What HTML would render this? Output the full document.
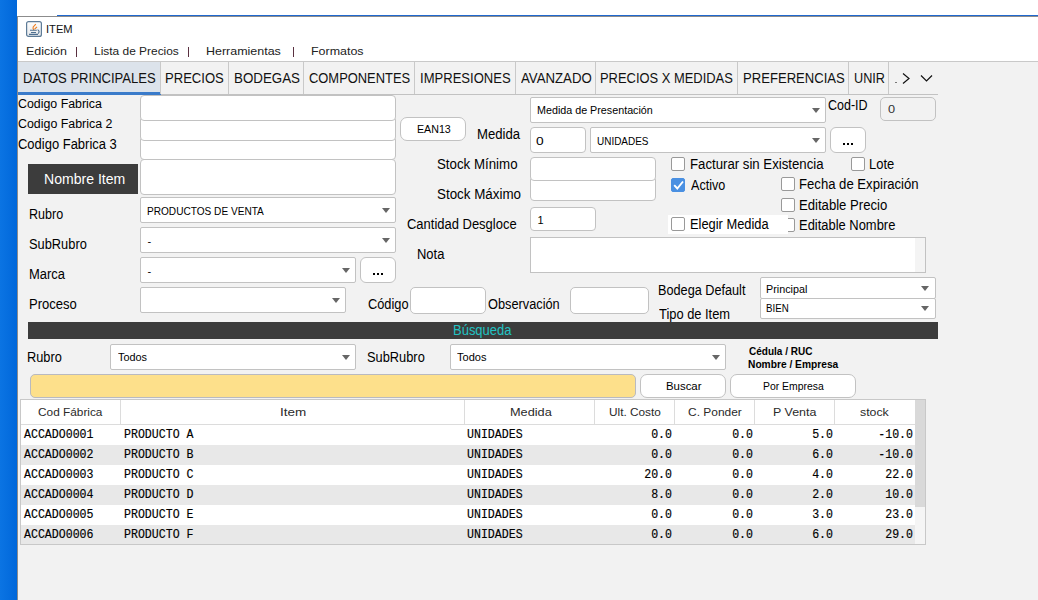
<!DOCTYPE html><html><head><meta charset="utf-8"><style>*{box-sizing:border-box;margin:0;padding:0}
html,body{width:1038px;height:600px;overflow:hidden;background:#f2f2f2;font-family:"Liberation Sans",sans-serif;color:#000}
.a{position:absolute}
.t{position:absolute;white-space:nowrap;line-height:1;transform-origin:left top}
</style></head><body>
<div class="a" style="left:0;top:0;width:17px;height:600px;background:linear-gradient(90deg,#0b74e3,#0067da)"></div>
<div class="a" style="left:17px;top:0;width:1021px;height:16px;background:#fff"></div>
<div class="a" style="left:57px;top:15px;width:981px;height:1px;background:#1f68cf"></div>
<div class="a" style="left:17px;top:16px;width:1021px;height:1px;background:#8c8c8c"></div>
<div class="a" style="left:17px;top:16px;width:1px;height:584px;background:#8c8c8c"></div>
<div class="a" style="left:18px;top:17px;width:1020px;height:44px;background:#fff"></div>
<!-- java icon -->
<svg class="a" style="left:26px;top:21px" width="16" height="16" viewBox="0 0 16 16">
<defs><linearGradient id="jg" x1="0" y1="0" x2="0" y2="1"><stop offset="0" stop-color="#fdfdfd"/><stop offset="1" stop-color="#e6e9ec"/></linearGradient></defs>
<rect x="0.6" y="0.6" width="14.8" height="14.8" rx="2" fill="url(#jg)" stroke="#5d7b97" stroke-width="1.2"/>
<path d="M9.8 3.2 L7.2 6 Q6.5 7.5 8 9.2 M11 5.8 L8.6 8.2" fill="none" stroke="#ef7b1a" stroke-width="1.1"/>
<path d="M4 9.3 H10.8 M5 11.5 H10 M3 13.4 H12" fill="none" stroke="#4f7090" stroke-width="1.1"/>
<path d="M11.6 8.6 Q14.2 10.2 12.2 12.6" fill="none" stroke="#4f7090" stroke-width="1.1"/>
</svg>
<div class="a" style="left:76px;top:47px;width:1px;height:10px;background:#5a3040"></div>
<div class="a" style="left:188px;top:47px;width:1px;height:10px;background:#5a3040"></div>
<div class="a" style="left:293px;top:47px;width:1px;height:10px;background:#5a3040"></div>

<!-- tab bar -->
<div class="a" style="left:18px;top:61px;width:1020px;height:1px;background:#c9c9c9"></div>
<div class="a" style="left:18px;top:94px;width:920px;height:1px;background:#c2c2c2"></div>
<div class="a" style="left:18px;top:62px;width:142px;height:30px;background:#dce3eb"></div>
<div class="a" style="left:18px;top:92px;width:143px;height:3px;background:#3a7bca"></div>
<div class="a" style="left:160px;top:62px;width:1px;height:32px;background:#c9c9c9"></div>
<div class="a" style="left:228px;top:62px;width:1px;height:32px;background:#c9c9c9"></div>
<div class="a" style="left:303px;top:62px;width:1px;height:32px;background:#c9c9c9"></div>
<div class="a" style="left:414px;top:62px;width:1px;height:32px;background:#c9c9c9"></div>
<div class="a" style="left:515px;top:62px;width:1px;height:32px;background:#c9c9c9"></div>
<div class="a" style="left:595px;top:62px;width:1px;height:32px;background:#c9c9c9"></div>
<div class="a" style="left:737px;top:62px;width:1px;height:32px;background:#c9c9c9"></div>
<div class="a" style="left:848px;top:62px;width:1px;height:32px;background:#c9c9c9"></div>
<div class="a" style="left:888px;top:62px;width:1px;height:32px;background:#c9c9c9"></div>
<div class="a" style="left:895px;top:82px;width:2px;height:1px;background:#777"></div>
<svg class="a" style="left:901px;top:72px" width="10" height="13"><path d="M2 1.5 L8 6.5 L2 11.5" fill="none" stroke="#111" stroke-width="1.2"/></svg>
<svg class="a" style="left:920px;top:74px" width="14" height="9"><path d="M1 1.5 L6.5 7 L12 1.5" fill="none" stroke="#111" stroke-width="1.2"/></svg>

<style>
.fld{position:absolute;background:#fff;border:1px solid #c2c2c2;border-radius:4px}
.cmb{position:absolute;background:#fff;border:1px solid #c2c2c2;border-radius:2px}
.arr{position:absolute;width:0;height:0;border-left:4.5px solid transparent;border-right:4.5px solid transparent;border-top:5px solid #666}
.btn{position:absolute;background:#fff;border:1px solid #c2c2c2;border-radius:6px}
.chk{position:absolute;width:14px;height:14px;background:#fff;border:1px solid #999;border-radius:2px}
.dots{position:absolute;width:2px;height:2px;background:#000}
</style>
<!-- left form -->
<div class="fld" style="left:140px;top:159px;width:256px;height:36px"></div>
<div class="fld" style="left:140px;top:136px;width:256px;height:24px"></div>
<div class="fld" style="left:140px;top:116px;width:256px;height:25px"></div>
<div class="fld" style="left:140px;top:95px;width:256px;height:26px"></div>
<div class="a" style="left:28px;top:164px;width:110px;height:30px;background:#3c3c3c"></div>

<div class="cmb" style="left:140px;top:197px;width:256px;height:26px"><div class="arr" style="left:241px;top:10px"></div></div>
<div class="cmb" style="left:140px;top:227px;width:256px;height:26px"><div class="arr" style="left:241px;top:10px"></div></div>
<div class="cmb" style="left:140px;top:257px;width:216px;height:26px"><div class="arr" style="left:201px;top:10px"></div></div>
<div class="btn" style="left:360px;top:257px;width:36px;height:26px"></div>
<div class="dots" style="left:373px;top:273px"></div><div class="dots" style="left:377px;top:273px"></div><div class="dots" style="left:381px;top:273px"></div>
<div class="cmb" style="left:140px;top:287px;width:206px;height:26px"><div class="arr" style="left:191px;top:10px"></div></div>

<!-- middle -->
<div class="btn" style="left:400px;top:117px;width:66px;height:24px;border-radius:7px"></div>
<div class="cmb" style="left:530px;top:97px;width:296px;height:26px"><div class="arr" style="left:281px;top:10px"></div></div>
<div class="fld" style="left:530px;top:127px;width:56px;height:26px"></div>
<div class="cmb" style="left:590px;top:127px;width:236px;height:26px"><div class="arr" style="left:221px;top:10px"></div></div>
<div class="btn" style="left:830px;top:127px;width:36px;height:26px"></div>
<div class="dots" style="left:843px;top:143px"></div><div class="dots" style="left:847px;top:143px"></div><div class="dots" style="left:851px;top:143px"></div>
<div class="fld" style="left:880px;top:97px;width:56px;height:24px;background:#f2f2f2;border-radius:5px"></div>

<div class="fld" style="left:530px;top:176px;width:126px;height:25px"></div>
<div class="fld" style="left:530px;top:157px;width:126px;height:24px"></div>
<div class="fld" style="left:530px;top:207px;width:66px;height:24px"></div>
<div class="a" style="left:530px;top:237px;width:396px;height:36px;background:#fff;border:1px solid #c2c2c2"></div>
<div class="a" style="left:915px;top:238px;width:10px;height:34px;background:#f4f4f4"></div>
<div class="fld" style="left:410px;top:287px;width:76px;height:27px;border-radius:5px"></div>
<div class="fld" style="left:570px;top:287px;width:79px;height:27px;border-radius:5px"></div>

<!-- checkboxes -->
<div class="chk" style="left:671px;top:157px"></div>
<div class="chk" style="left:851px;top:157px"></div>
<div class="chk" style="left:671px;top:178px;background:#4a90e2;border-color:#4a90e2"><svg class="a" style="left:1px;top:1px" width="12" height="12"><path d="M1.2 5.2 L4.3 8.5 L10 1.5" fill="none" stroke="#fff" stroke-width="1.9"/></svg></div>
<div class="chk" style="left:781px;top:177px"></div>
<div class="chk" style="left:781px;top:198px"></div>
<div class="chk" style="left:781px;top:218px"></div>
<div class="a" style="left:668px;top:215px;width:120px;height:19px;background:#fff"></div>
<div class="chk" style="left:671px;top:217px"></div>

<div class="cmb" style="left:760px;top:277px;width:176px;height:22px"><div class="arr" style="left:160px;top:8px"></div></div>
<div class="cmb" style="left:760px;top:298px;width:176px;height:21px"><div class="arr" style="left:160px;top:7px"></div></div>

<!-- busqueda -->
<div class="a" style="left:28px;top:322px;width:910px;height:17px;background:#3c3c3c"></div>
<div class="cmb" style="left:110px;top:344px;width:246px;height:26px"><div class="arr" style="left:231px;top:10px"></div></div>
<div class="cmb" style="left:450px;top:344px;width:276px;height:26px"><div class="arr" style="left:261px;top:10px"></div></div>
<div class="a" style="left:30px;top:374px;width:606px;height:24px;background:#fde08b;border:1px solid #b9bac0;border-radius:5px"></div>
<div class="btn" style="left:640px;top:374px;width:86px;height:24px;border-radius:7px"></div>
<div class="btn" style="left:730px;top:374px;width:126px;height:24px;border-radius:7px"></div>

<!-- table -->
<div class="a" style="left:20px;top:399px;width:906px;height:146px;background:#fff;border:1px solid #c8c8c8"></div>
<div class="a" style="left:21px;top:424px;width:894px;height:1px;background:#dcdcdc"></div>
<div class="a" style="left:120px;top:400px;width:1px;height:24px;background:#dcdcdc"></div>
<div class="a" style="left:464px;top:400px;width:1px;height:24px;background:#dcdcdc"></div>
<div class="a" style="left:594px;top:400px;width:1px;height:24px;background:#dcdcdc"></div>
<div class="a" style="left:674px;top:400px;width:1px;height:24px;background:#dcdcdc"></div>
<div class="a" style="left:754px;top:400px;width:1px;height:24px;background:#dcdcdc"></div>
<div class="a" style="left:834px;top:400px;width:1px;height:24px;background:#dcdcdc"></div>
<div class="a" style="left:21px;top:445px;width:894px;height:20px;background:#e8e8e8"></div>
<div class="a" style="left:21px;top:485px;width:894px;height:20px;background:#e8e8e8"></div>
<div class="a" style="left:21px;top:525px;width:894px;height:19px;background:#e8e8e8"></div>
<div class="a" style="left:915px;top:400px;width:10px;height:144px;background:#f5f5f5"></div>
<div class="a" style="left:915px;top:400px;width:10px;height:107px;background:#d9d9d9"></div>
<div class="t" style="left:45.86px;top:24px;font-family:'Liberation Sans',sans-serif;font-weight:normal;font-size:11.0px;color:#111;transform:scaleX(1.0123);">ITEM</div>
<div class="t" style="left:26.05px;top:46px;font-family:'Liberation Sans',sans-serif;font-weight:normal;font-size:11.0px;color:#222;transform:scaleX(1.1316);">Edición</div>
<div class="t" style="left:94.09px;top:46px;font-family:'Liberation Sans',sans-serif;font-weight:normal;font-size:11.0px;color:#222;transform:scaleX(1.0840);">Lista de Precios</div>
<div class="t" style="left:206.03px;top:46px;font-family:'Liberation Sans',sans-serif;font-weight:normal;font-size:11.0px;color:#222;transform:scaleX(1.1335);">Herramientas</div>
<div class="t" style="left:311.01px;top:46px;font-family:'Liberation Sans',sans-serif;font-weight:normal;font-size:11.0px;color:#222;transform:scaleX(1.1322);">Formatos</div>
<div class="t" style="left:22.99px;top:71px;font-family:'Liberation Sans',sans-serif;font-weight:normal;font-size:14.0px;color:#111;transform:scaleX(0.9323);">DATOS PRINCIPALES</div>
<div class="t" style="left:165.09px;top:71px;font-family:'Liberation Sans',sans-serif;font-weight:normal;font-size:14.0px;color:#111;transform:scaleX(0.9335);">PRECIOS</div>
<div class="t" style="left:233.96px;top:71px;font-family:'Liberation Sans',sans-serif;font-weight:normal;font-size:14.0px;color:#111;transform:scaleX(0.9530);">BODEGAS</div>
<div class="t" style="left:308.63px;top:71px;font-family:'Liberation Sans',sans-serif;font-weight:normal;font-size:14.0px;color:#111;transform:scaleX(0.9226);">COMPONENTES</div>
<div class="t" style="left:419.76px;top:71px;font-family:'Liberation Sans',sans-serif;font-weight:normal;font-size:14.0px;color:#111;transform:scaleX(0.9324);">IMPRESIONES</div>
<div class="t" style="left:520.69px;top:71px;font-family:'Liberation Sans',sans-serif;font-weight:normal;font-size:14.0px;color:#111;transform:scaleX(0.9442);">AVANZADO</div>
<div class="t" style="left:600.46px;top:71px;font-family:'Liberation Sans',sans-serif;font-weight:normal;font-size:14.0px;color:#111;transform:scaleX(0.9228);">PRECIOS X MEDIDAS</div>
<div class="t" style="left:742.75px;top:71px;font-family:'Liberation Sans',sans-serif;font-weight:normal;font-size:14.0px;color:#111;transform:scaleX(0.9348);">PREFERENCIAS</div>
<div class="t" style="left:853.70px;top:71px;font-family:'Liberation Sans',sans-serif;font-weight:normal;font-size:14.0px;color:#111;transform:scaleX(0.9041);">UNIR</div>
<div class="t" style="left:18.21px;top:98px;font-family:'Liberation Sans',sans-serif;font-weight:normal;font-size:12.5px;color:#000;transform:scaleX(0.9900);">Codigo Fabrica</div>
<div class="t" style="left:18.21px;top:118px;font-family:'Liberation Sans',sans-serif;font-weight:normal;font-size:12.5px;color:#000;transform:scaleX(0.9913);">Codigo Fabrica 2</div>
<div class="t" style="left:18.22px;top:137px;font-family:'Liberation Sans',sans-serif;font-weight:normal;font-size:14.0px;color:#000;transform:scaleX(0.9265);">Codigo Fabrica 3</div>
<div class="t" style="left:43.70px;top:172px;font-family:'Liberation Sans',sans-serif;font-weight:normal;font-size:14.0px;color:#fff;transform:scaleX(1.0041);">Nombre Item</div>
<div class="t" style="left:28.59px;top:207px;font-family:'Liberation Sans',sans-serif;font-weight:normal;font-size:14.0px;color:#000;transform:scaleX(0.8966);">Rubro</div>
<div class="t" style="left:28.59px;top:237px;font-family:'Liberation Sans',sans-serif;font-weight:normal;font-size:14.0px;color:#000;transform:scaleX(0.9173);">SubRubro</div>
<div class="t" style="left:28.59px;top:267px;font-family:'Liberation Sans',sans-serif;font-weight:normal;font-size:14.0px;color:#000;transform:scaleX(0.9256);">Marca</div>
<div class="t" style="left:28.59px;top:297px;font-family:'Liberation Sans',sans-serif;font-weight:normal;font-size:14.0px;color:#000;transform:scaleX(0.9316);">Proceso</div>
<div class="t" style="left:416.74px;top:124px;font-family:'Liberation Sans',sans-serif;font-weight:normal;font-size:11.0px;color:#000;transform:scaleX(0.9689);">EAN13</div>
<div class="t" style="left:477.44px;top:127px;font-family:'Liberation Sans',sans-serif;font-weight:normal;font-size:14.0px;color:#000;transform:scaleX(0.9382);">Medida</div>
<div class="t" style="left:437.36px;top:157px;font-family:'Liberation Sans',sans-serif;font-weight:normal;font-size:14.0px;color:#000;transform:scaleX(0.9497);">Stock Mínimo</div>
<div class="t" style="left:437.36px;top:187px;font-family:'Liberation Sans',sans-serif;font-weight:normal;font-size:14.0px;color:#000;transform:scaleX(0.9555);">Stock Máximo</div>
<div class="t" style="left:407.34px;top:217px;font-family:'Liberation Sans',sans-serif;font-weight:normal;font-size:14.0px;color:#000;transform:scaleX(0.9266);">Cantidad Desgloce</div>
<div class="t" style="left:417.39px;top:247px;font-family:'Liberation Sans',sans-serif;font-weight:normal;font-size:14.0px;color:#000;transform:scaleX(0.9264);">Nota</div>
<div class="t" style="left:367.93px;top:297px;font-family:'Liberation Sans',sans-serif;font-weight:normal;font-size:14.0px;color:#000;transform:scaleX(0.9142);">Código</div>
<div class="t" style="left:487.92px;top:297px;font-family:'Liberation Sans',sans-serif;font-weight:normal;font-size:14.0px;color:#000;transform:scaleX(0.9119);">Observación</div>
<div class="t" style="left:828.09px;top:98px;font-family:'Liberation Sans',sans-serif;font-weight:normal;font-size:14.0px;color:#000;transform:scaleX(0.8918);">Cod-ID</div>
<div class="t" style="left:888.25px;top:105px;font-family:'Liberation Sans',sans-serif;font-weight:normal;font-size:10.2px;color:#333;transform:scaleX(1.2500);">0</div>
<div class="t" style="left:689.57px;top:157px;font-family:'Liberation Sans',sans-serif;font-weight:normal;font-size:14.0px;color:#000;transform:scaleX(0.9431);">Facturar sin Existencia</div>
<div class="t" style="left:868.98px;top:157px;font-family:'Liberation Sans',sans-serif;font-weight:normal;font-size:14.0px;color:#000;transform:scaleX(0.9281);">Lote</div>
<div class="t" style="left:690.50px;top:178px;font-family:'Liberation Sans',sans-serif;font-weight:normal;font-size:14.0px;color:#000;transform:scaleX(0.8993);">Activo</div>
<div class="t" style="left:798.98px;top:177px;font-family:'Liberation Sans',sans-serif;font-weight:normal;font-size:14.0px;color:#000;transform:scaleX(0.9374);">Fecha de Expiración</div>
<div class="t" style="left:798.97px;top:198px;font-family:'Liberation Sans',sans-serif;font-weight:normal;font-size:14.0px;color:#000;transform:scaleX(0.9373);">Editable Precio</div>
<div class="t" style="left:798.99px;top:218px;font-family:'Liberation Sans',sans-serif;font-weight:normal;font-size:14.0px;color:#000;transform:scaleX(0.9239);">Editable Nombre</div>
<div class="t" style="left:689.59px;top:217px;font-family:'Liberation Sans',sans-serif;font-weight:normal;font-size:14.0px;color:#000;transform:scaleX(0.9191);">Elegir Medida</div>
<div class="t" style="left:658.03px;top:283px;font-family:'Liberation Sans',sans-serif;font-weight:normal;font-size:14.0px;color:#000;transform:scaleX(0.9062);">Bodega Default</div>
<div class="t" style="left:658.91px;top:307px;font-family:'Liberation Sans',sans-serif;font-weight:normal;font-size:14.0px;color:#000;transform:scaleX(0.9195);">Tipo de Item</div>
<div class="t" style="left:147.01px;top:206px;font-family:'Liberation Sans',sans-serif;font-weight:normal;font-size:11.0px;color:#000;transform:scaleX(0.9176);">PRODUCTOS DE VENTA</div>
<div class="t" style="left:147.40px;top:236px;font-family:'Liberation Sans',sans-serif;font-weight:normal;font-size:11.0px;color:#000;transform:scaleX(1.0000);">-</div>
<div class="t" style="left:147.40px;top:266px;font-family:'Liberation Sans',sans-serif;font-weight:normal;font-size:11.0px;color:#000;transform:scaleX(1.0000);">-</div>
<div class="t" style="left:536.93px;top:105px;font-family:'Liberation Sans',sans-serif;font-weight:normal;font-size:11.0px;color:#000;transform:scaleX(0.9761);">Medida de Presentación</div>
<div class="t" style="left:536.46px;top:136px;font-family:'Liberation Sans',sans-serif;font-weight:normal;font-size:11.0px;color:#000;transform:scaleX(1.2500);">0</div>
<div class="t" style="left:596.63px;top:136px;font-family:'Liberation Sans',sans-serif;font-weight:normal;font-size:11.0px;color:#000;transform:scaleX(0.9064);">UNIDADES</div>
<div class="t" style="left:537.40px;top:215px;font-family:'Liberation Sans',sans-serif;font-weight:normal;font-size:11.0px;color:#000;transform:scaleX(1.0000);">1</div>
<div class="t" style="left:766.32px;top:284px;font-family:'Liberation Sans',sans-serif;font-weight:normal;font-size:11.0px;color:#000;transform:scaleX(0.9798);">Principal</div>
<div class="t" style="left:766.38px;top:303px;font-family:'Liberation Sans',sans-serif;font-weight:normal;font-size:11.0px;color:#000;transform:scaleX(0.8848);">BIEN</div>
<div class="t" style="left:118.34px;top:352px;font-family:'Liberation Sans',sans-serif;font-weight:normal;font-size:11.0px;color:#000;transform:scaleX(0.9884);">Todos</div>
<div class="t" style="left:457.27px;top:352px;font-family:'Liberation Sans',sans-serif;font-weight:normal;font-size:11.0px;color:#000;transform:scaleX(1.0043);">Todos</div>
<div class="t" style="left:27.41px;top:350px;font-family:'Liberation Sans',sans-serif;font-weight:normal;font-size:14.0px;color:#000;transform:scaleX(0.9145);">Rubro</div>
<div class="t" style="left:367.46px;top:350px;font-family:'Liberation Sans',sans-serif;font-weight:normal;font-size:14.0px;color:#000;transform:scaleX(0.9164);">SubRubro</div>
<div class="t" style="left:453.16px;top:323px;font-family:'Liberation Sans',sans-serif;font-weight:normal;font-size:14.0px;color:#22c3c3;transform:scaleX(0.9272);">Búsqueda</div>
<div class="t" style="left:748.67px;top:347px;font-family:'Liberation Sans',sans-serif;font-weight:bold;font-size:10.4px;color:#000;transform:scaleX(0.9628);">Cédula / RUC</div>
<div class="t" style="left:747.58px;top:360px;font-family:'Liberation Sans',sans-serif;font-weight:bold;font-size:10.4px;color:#000;transform:scaleX(0.9833);">Nombre / Empresa</div>
<div class="t" style="left:665.84px;top:381px;font-family:'Liberation Sans',sans-serif;font-weight:normal;font-size:11.0px;color:#000;transform:scaleX(1.0370);">Buscar</div>
<div class="t" style="left:762.61px;top:381px;font-family:'Liberation Sans',sans-serif;font-weight:normal;font-size:11.0px;color:#000;transform:scaleX(0.9466);">Por Empresa</div>
<div class="t" style="left:38.35px;top:407px;font-family:'Liberation Sans',sans-serif;font-weight:normal;font-size:11.0px;color:#2a2a2a;transform:scaleX(1.0757);">Cod Fábrica</div>
<div class="t" style="left:280.06px;top:407px;font-family:'Liberation Sans',sans-serif;font-weight:normal;font-size:11.0px;color:#2a2a2a;transform:scaleX(1.2252);">Item</div>
<div class="t" style="left:510.20px;top:407px;font-family:'Liberation Sans',sans-serif;font-weight:normal;font-size:11.0px;color:#2a2a2a;transform:scaleX(1.1565);">Medida</div>
<div class="t" style="left:609.32px;top:407px;font-family:'Liberation Sans',sans-serif;font-weight:normal;font-size:11.0px;color:#2a2a2a;transform:scaleX(1.0739);">Ult. Costo</div>
<div class="t" style="left:688.33px;top:407px;font-family:'Liberation Sans',sans-serif;font-weight:normal;font-size:11.0px;color:#2a2a2a;transform:scaleX(1.0861);">C. Ponder</div>
<div class="t" style="left:773.34px;top:407px;font-family:'Liberation Sans',sans-serif;font-weight:normal;font-size:11.0px;color:#2a2a2a;transform:scaleX(1.1309);">P Venta</div>
<div class="t" style="left:860.32px;top:407px;font-family:'Liberation Sans',sans-serif;font-weight:normal;font-size:11.0px;color:#2a2a2a;transform:scaleX(1.1201);">stock</div>
<div class="t" style="left:24.43px;top:429px;font-family:'Liberation Mono',monospace;font-size:12.0px;color:#000;transform:scaleX(0.9653);-webkit-text-stroke:0.15px #000">ACCADO0001</div>
<div class="t" style="left:124.03px;top:429px;font-family:'Liberation Mono',monospace;font-size:12.0px;color:#000;transform:scaleX(0.9653);-webkit-text-stroke:0.15px #000">PRODUCTO&nbsp;A</div>
<div class="t" style="left:467.33px;top:429px;font-family:'Liberation Mono',monospace;font-size:12.0px;color:#000;transform:scaleX(0.9653);-webkit-text-stroke:0.15px #000">UNIDADES</div>
<div class="t" style="left:272.27px;width:400px;text-align:right;top:429px;font-family:'Liberation Mono',monospace;font-size:12.0px;color:#000;transform-origin:right;transform:scaleX(0.9653);-webkit-text-stroke:0.15px #000">0.0</div>
<div class="t" style="left:352.57px;width:400px;text-align:right;top:429px;font-family:'Liberation Mono',monospace;font-size:12.0px;color:#000;transform-origin:right;transform:scaleX(0.9653);-webkit-text-stroke:0.15px #000">0.0</div>
<div class="t" style="left:432.57px;width:400px;text-align:right;top:429px;font-family:'Liberation Mono',monospace;font-size:12.0px;color:#000;transform-origin:right;transform:scaleX(0.9653);-webkit-text-stroke:0.15px #000">5.0</div>
<div class="t" style="left:512.57px;width:400px;text-align:right;top:429px;font-family:'Liberation Mono',monospace;font-size:12.0px;color:#000;transform-origin:right;transform:scaleX(0.9653);-webkit-text-stroke:0.15px #000">-10.0</div>
<div class="t" style="left:24.43px;top:449px;font-family:'Liberation Mono',monospace;font-size:12.0px;color:#000;transform:scaleX(0.9653);-webkit-text-stroke:0.15px #000">ACCADO0002</div>
<div class="t" style="left:124.03px;top:449px;font-family:'Liberation Mono',monospace;font-size:12.0px;color:#000;transform:scaleX(0.9653);-webkit-text-stroke:0.15px #000">PRODUCTO&nbsp;B</div>
<div class="t" style="left:467.33px;top:449px;font-family:'Liberation Mono',monospace;font-size:12.0px;color:#000;transform:scaleX(0.9653);-webkit-text-stroke:0.15px #000">UNIDADES</div>
<div class="t" style="left:272.27px;width:400px;text-align:right;top:449px;font-family:'Liberation Mono',monospace;font-size:12.0px;color:#000;transform-origin:right;transform:scaleX(0.9653);-webkit-text-stroke:0.15px #000">0.0</div>
<div class="t" style="left:352.57px;width:400px;text-align:right;top:449px;font-family:'Liberation Mono',monospace;font-size:12.0px;color:#000;transform-origin:right;transform:scaleX(0.9653);-webkit-text-stroke:0.15px #000">0.0</div>
<div class="t" style="left:432.57px;width:400px;text-align:right;top:449px;font-family:'Liberation Mono',monospace;font-size:12.0px;color:#000;transform-origin:right;transform:scaleX(0.9653);-webkit-text-stroke:0.15px #000">6.0</div>
<div class="t" style="left:512.57px;width:400px;text-align:right;top:449px;font-family:'Liberation Mono',monospace;font-size:12.0px;color:#000;transform-origin:right;transform:scaleX(0.9653);-webkit-text-stroke:0.15px #000">-10.0</div>
<div class="t" style="left:24.43px;top:469px;font-family:'Liberation Mono',monospace;font-size:12.0px;color:#000;transform:scaleX(0.9653);-webkit-text-stroke:0.15px #000">ACCADO0003</div>
<div class="t" style="left:124.03px;top:469px;font-family:'Liberation Mono',monospace;font-size:12.0px;color:#000;transform:scaleX(0.9653);-webkit-text-stroke:0.15px #000">PRODUCTO&nbsp;C</div>
<div class="t" style="left:467.33px;top:469px;font-family:'Liberation Mono',monospace;font-size:12.0px;color:#000;transform:scaleX(0.9653);-webkit-text-stroke:0.15px #000">UNIDADES</div>
<div class="t" style="left:272.27px;width:400px;text-align:right;top:469px;font-family:'Liberation Mono',monospace;font-size:12.0px;color:#000;transform-origin:right;transform:scaleX(0.9653);-webkit-text-stroke:0.15px #000">20.0</div>
<div class="t" style="left:352.57px;width:400px;text-align:right;top:469px;font-family:'Liberation Mono',monospace;font-size:12.0px;color:#000;transform-origin:right;transform:scaleX(0.9653);-webkit-text-stroke:0.15px #000">0.0</div>
<div class="t" style="left:432.57px;width:400px;text-align:right;top:469px;font-family:'Liberation Mono',monospace;font-size:12.0px;color:#000;transform-origin:right;transform:scaleX(0.9653);-webkit-text-stroke:0.15px #000">4.0</div>
<div class="t" style="left:512.57px;width:400px;text-align:right;top:469px;font-family:'Liberation Mono',monospace;font-size:12.0px;color:#000;transform-origin:right;transform:scaleX(0.9653);-webkit-text-stroke:0.15px #000">22.0</div>
<div class="t" style="left:24.43px;top:489px;font-family:'Liberation Mono',monospace;font-size:12.0px;color:#000;transform:scaleX(0.9653);-webkit-text-stroke:0.15px #000">ACCADO0004</div>
<div class="t" style="left:124.03px;top:489px;font-family:'Liberation Mono',monospace;font-size:12.0px;color:#000;transform:scaleX(0.9653);-webkit-text-stroke:0.15px #000">PRODUCTO&nbsp;D</div>
<div class="t" style="left:467.33px;top:489px;font-family:'Liberation Mono',monospace;font-size:12.0px;color:#000;transform:scaleX(0.9653);-webkit-text-stroke:0.15px #000">UNIDADES</div>
<div class="t" style="left:272.27px;width:400px;text-align:right;top:489px;font-family:'Liberation Mono',monospace;font-size:12.0px;color:#000;transform-origin:right;transform:scaleX(0.9653);-webkit-text-stroke:0.15px #000">8.0</div>
<div class="t" style="left:352.57px;width:400px;text-align:right;top:489px;font-family:'Liberation Mono',monospace;font-size:12.0px;color:#000;transform-origin:right;transform:scaleX(0.9653);-webkit-text-stroke:0.15px #000">0.0</div>
<div class="t" style="left:432.57px;width:400px;text-align:right;top:489px;font-family:'Liberation Mono',monospace;font-size:12.0px;color:#000;transform-origin:right;transform:scaleX(0.9653);-webkit-text-stroke:0.15px #000">2.0</div>
<div class="t" style="left:512.57px;width:400px;text-align:right;top:489px;font-family:'Liberation Mono',monospace;font-size:12.0px;color:#000;transform-origin:right;transform:scaleX(0.9653);-webkit-text-stroke:0.15px #000">10.0</div>
<div class="t" style="left:24.43px;top:509px;font-family:'Liberation Mono',monospace;font-size:12.0px;color:#000;transform:scaleX(0.9653);-webkit-text-stroke:0.15px #000">ACCADO0005</div>
<div class="t" style="left:124.03px;top:509px;font-family:'Liberation Mono',monospace;font-size:12.0px;color:#000;transform:scaleX(0.9653);-webkit-text-stroke:0.15px #000">PRODUCTO&nbsp;E</div>
<div class="t" style="left:467.33px;top:509px;font-family:'Liberation Mono',monospace;font-size:12.0px;color:#000;transform:scaleX(0.9653);-webkit-text-stroke:0.15px #000">UNIDADES</div>
<div class="t" style="left:272.27px;width:400px;text-align:right;top:509px;font-family:'Liberation Mono',monospace;font-size:12.0px;color:#000;transform-origin:right;transform:scaleX(0.9653);-webkit-text-stroke:0.15px #000">0.0</div>
<div class="t" style="left:352.57px;width:400px;text-align:right;top:509px;font-family:'Liberation Mono',monospace;font-size:12.0px;color:#000;transform-origin:right;transform:scaleX(0.9653);-webkit-text-stroke:0.15px #000">0.0</div>
<div class="t" style="left:432.57px;width:400px;text-align:right;top:509px;font-family:'Liberation Mono',monospace;font-size:12.0px;color:#000;transform-origin:right;transform:scaleX(0.9653);-webkit-text-stroke:0.15px #000">3.0</div>
<div class="t" style="left:512.57px;width:400px;text-align:right;top:509px;font-family:'Liberation Mono',monospace;font-size:12.0px;color:#000;transform-origin:right;transform:scaleX(0.9653);-webkit-text-stroke:0.15px #000">23.0</div>
<div class="t" style="left:24.43px;top:529px;font-family:'Liberation Mono',monospace;font-size:12.0px;color:#000;transform:scaleX(0.9653);-webkit-text-stroke:0.15px #000">ACCADO0006</div>
<div class="t" style="left:124.03px;top:529px;font-family:'Liberation Mono',monospace;font-size:12.0px;color:#000;transform:scaleX(0.9653);-webkit-text-stroke:0.15px #000">PRODUCTO&nbsp;F</div>
<div class="t" style="left:467.33px;top:529px;font-family:'Liberation Mono',monospace;font-size:12.0px;color:#000;transform:scaleX(0.9653);-webkit-text-stroke:0.15px #000">UNIDADES</div>
<div class="t" style="left:272.27px;width:400px;text-align:right;top:529px;font-family:'Liberation Mono',monospace;font-size:12.0px;color:#000;transform-origin:right;transform:scaleX(0.9653);-webkit-text-stroke:0.15px #000">0.0</div>
<div class="t" style="left:352.57px;width:400px;text-align:right;top:529px;font-family:'Liberation Mono',monospace;font-size:12.0px;color:#000;transform-origin:right;transform:scaleX(0.9653);-webkit-text-stroke:0.15px #000">0.0</div>
<div class="t" style="left:432.57px;width:400px;text-align:right;top:529px;font-family:'Liberation Mono',monospace;font-size:12.0px;color:#000;transform-origin:right;transform:scaleX(0.9653);-webkit-text-stroke:0.15px #000">6.0</div>
<div class="t" style="left:512.57px;width:400px;text-align:right;top:529px;font-family:'Liberation Mono',monospace;font-size:12.0px;color:#000;transform-origin:right;transform:scaleX(0.9653);-webkit-text-stroke:0.15px #000">29.0</div>
</body></html>
